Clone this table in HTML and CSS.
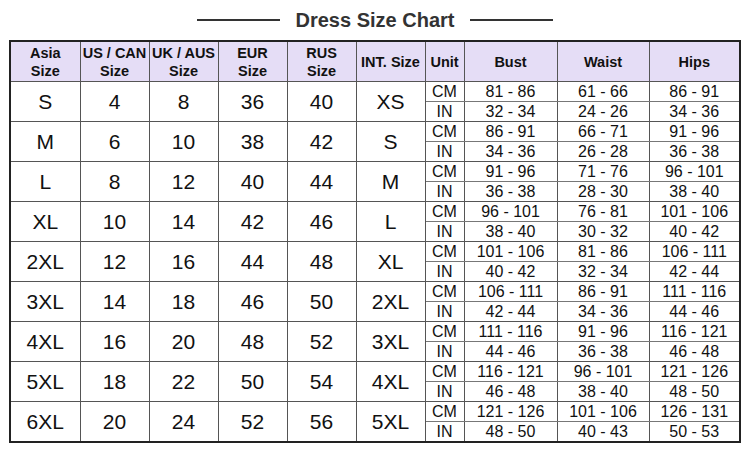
FILE: index.html
```html
<!DOCTYPE html>
<html>
<head>
<meta charset="utf-8">
<link rel="stylesheet" href="styles.css">
</head>
<body>
<div class="title">
  <span class="rule"></span>
  <h1>Dress Size Chart</h1>
  <span class="rule"></span>
</div>
<table class="chart">
  <colgroup>
    <col style="width:70px"><col style="width:69px"><col style="width:69px"><col style="width:69px"><col style="width:69px"><col style="width:69px"><col style="width:39px"><col style="width:93px"><col style="width:92px"><col style="width:91px">
  </colgroup>
  <thead>
    <tr>
      <th>Asia<br>Size</th><th>US / CAN<br>Size</th><th>UK / AUS<br>Size</th><th>EUR<br>Size</th><th>RUS<br>Size</th><th>INT. Size</th><th>Unit</th><th>Bust</th><th>Waist</th><th>Hips</th>
    </tr>
  </thead>
  <tbody>
    <tr class="cm"><td rowspan="2" class="big">S</td><td rowspan="2" class="big">4</td><td rowspan="2" class="big">8</td><td rowspan="2" class="big">36</td><td rowspan="2" class="big">40</td><td rowspan="2" class="big">XS</td><td>CM</td><td>81 - 86</td><td>61 - 66</td><td>86 - 91</td></tr>
    <tr class="in"><td>IN</td><td>32 - 34</td><td>24 - 26</td><td>34 - 36</td></tr>
    <tr class="cm"><td rowspan="2" class="big">M</td><td rowspan="2" class="big">6</td><td rowspan="2" class="big">10</td><td rowspan="2" class="big">38</td><td rowspan="2" class="big">42</td><td rowspan="2" class="big">S</td><td>CM</td><td>86 - 91</td><td>66 - 71</td><td>91 - 96</td></tr>
    <tr class="in"><td>IN</td><td>34 - 36</td><td>26 - 28</td><td>36 - 38</td></tr>
    <tr class="cm"><td rowspan="2" class="big">L</td><td rowspan="2" class="big">8</td><td rowspan="2" class="big">12</td><td rowspan="2" class="big">40</td><td rowspan="2" class="big">44</td><td rowspan="2" class="big">M</td><td>CM</td><td>91 - 96</td><td>71 - 76</td><td>96 - 101</td></tr>
    <tr class="in"><td>IN</td><td>36 - 38</td><td>28 - 30</td><td>38 - 40</td></tr>
    <tr class="cm"><td rowspan="2" class="big">XL</td><td rowspan="2" class="big">10</td><td rowspan="2" class="big">14</td><td rowspan="2" class="big">42</td><td rowspan="2" class="big">46</td><td rowspan="2" class="big">L</td><td>CM</td><td>96 - 101</td><td>76 - 81</td><td>101 - 106</td></tr>
    <tr class="in"><td>IN</td><td>38 - 40</td><td>30 - 32</td><td>40 - 42</td></tr>
    <tr class="cm"><td rowspan="2" class="big">2XL</td><td rowspan="2" class="big">12</td><td rowspan="2" class="big">16</td><td rowspan="2" class="big">44</td><td rowspan="2" class="big">48</td><td rowspan="2" class="big">XL</td><td>CM</td><td>101 - 106</td><td>81 - 86</td><td>106 - 111</td></tr>
    <tr class="in"><td>IN</td><td>40 - 42</td><td>32 - 34</td><td>42 - 44</td></tr>
    <tr class="cm"><td rowspan="2" class="big">3XL</td><td rowspan="2" class="big">14</td><td rowspan="2" class="big">18</td><td rowspan="2" class="big">46</td><td rowspan="2" class="big">50</td><td rowspan="2" class="big">2XL</td><td>CM</td><td>106 - 111</td><td>86 - 91</td><td>111 - 116</td></tr>
    <tr class="in"><td>IN</td><td>42 - 44</td><td>34 - 36</td><td>44 - 46</td></tr>
    <tr class="cm"><td rowspan="2" class="big">4XL</td><td rowspan="2" class="big">16</td><td rowspan="2" class="big">20</td><td rowspan="2" class="big">48</td><td rowspan="2" class="big">52</td><td rowspan="2" class="big">3XL</td><td>CM</td><td>111 - 116</td><td>91 - 96</td><td>116 - 121</td></tr>
    <tr class="in"><td>IN</td><td>44 - 46</td><td>36 - 38</td><td>46 - 48</td></tr>
    <tr class="cm"><td rowspan="2" class="big">5XL</td><td rowspan="2" class="big">18</td><td rowspan="2" class="big">22</td><td rowspan="2" class="big">50</td><td rowspan="2" class="big">54</td><td rowspan="2" class="big">4XL</td><td>CM</td><td>116 - 121</td><td>96 - 101</td><td>121 - 126</td></tr>
    <tr class="in"><td>IN</td><td>46 - 48</td><td>38 - 40</td><td>48 - 50</td></tr>
    <tr class="cm"><td rowspan="2" class="big">6XL</td><td rowspan="2" class="big">20</td><td rowspan="2" class="big">24</td><td rowspan="2" class="big">52</td><td rowspan="2" class="big">56</td><td rowspan="2" class="big">5XL</td><td>CM</td><td>121 - 126</td><td>101 - 106</td><td>126 - 131</td></tr>
    <tr class="in"><td>IN</td><td>48 - 50</td><td>40 - 43</td><td>50 - 53</td></tr>
  </tbody>
</table>
</body>
</html>
```

FILE: styles.css
```css
html, body {
  margin: 0;
  padding: 0;
  background: #ffffff;
}

body {
  font-family: "Liberation Sans", Arial, sans-serif;
  color: #111;
}

.title {
  height: 40px;
  display: flex;
  align-items: center;
  justify-content: center;
  gap: 16px;
}

.title h1 {
  margin: 0;
  font-size: 20px;
  font-weight: bold;
  color: #333;
  line-height: 24px;
}

.rule {
  width: 83px;
  height: 2px;
  background: #333;
}

.chart {
  margin-left: 9px;
  border-collapse: collapse;
  table-layout: fixed;
  width: 731px;
  border: 2px solid #222;
}

.chart th,
.chart td {
  border: 1px solid #555;
  padding: 0;
  text-align: center;
  vertical-align: middle;
  overflow: hidden;
  white-space: nowrap;
}

.chart th {
  background: #e5ddf6;
  font-size: 14.5px;
  font-weight: bold;
  line-height: 18px;
  height: 39px;
  color: #111;
}

.chart td {
  font-size: 16px;
  line-height: 19px;
  height: 19px;
}

.chart td.big {
  font-size: 21px;
}

.chart tr.cm td:not(.big) {
  border-bottom-color: #777;
}
```
